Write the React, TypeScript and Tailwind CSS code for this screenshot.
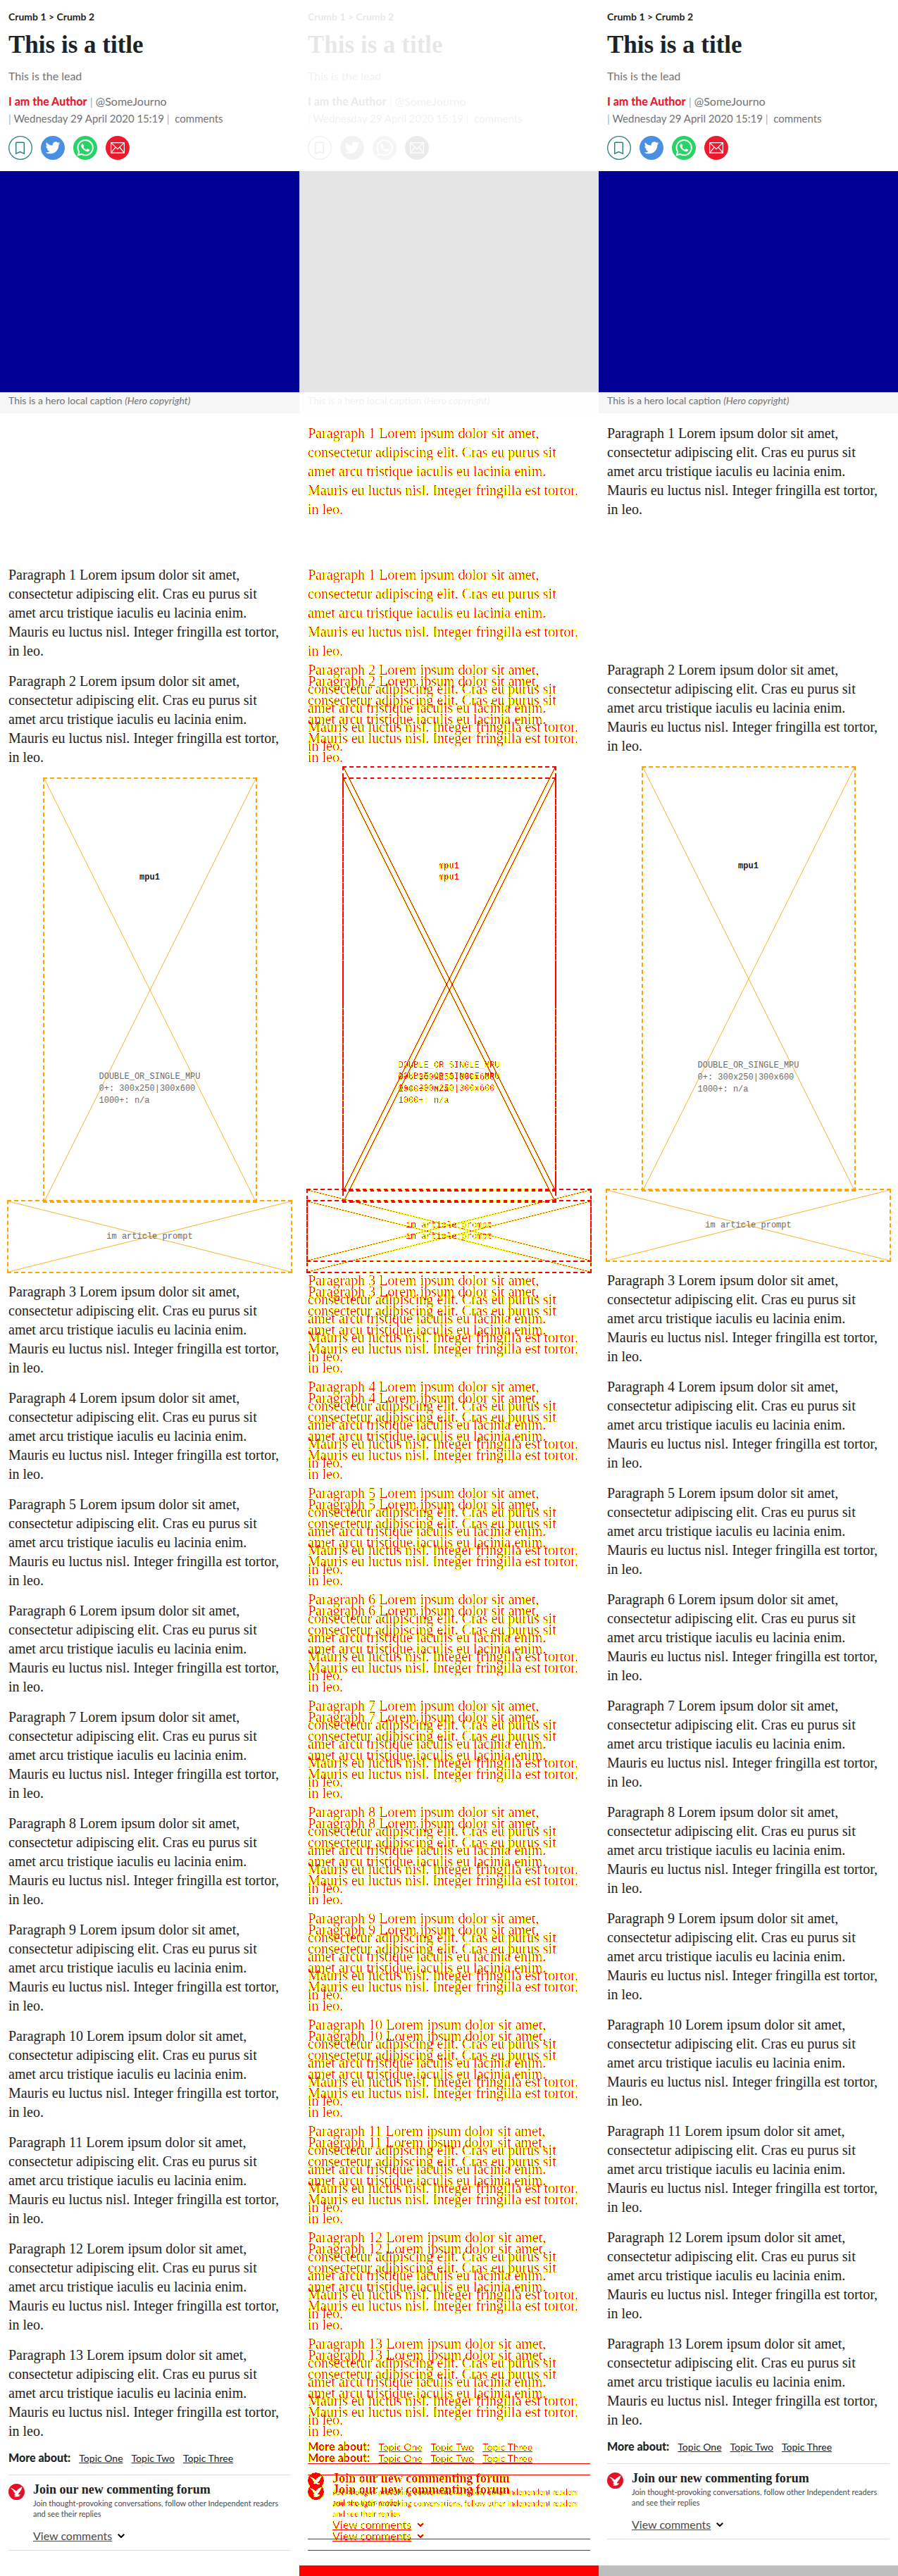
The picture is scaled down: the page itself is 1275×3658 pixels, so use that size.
import React from "react";

const SANS = "font-['Lato','Open_Sans',sans-serif]";
const REST = [3, 4, 5, 6, 7, 8, 9, 10, 11, 12, 13];

function ShareBar() {
  return (
    <div className="mt-[13px] flex gap-3">
      <button aria-label="Bookmark" className="size-[34px]">
        <svg viewBox="0 0 34 34" fill="none" stroke="#2f7f7f">
          <circle cx="17" cy="17" r="16.3" strokeWidth="1.3" />
          <path d="M10.7 10.2a.9.9 0 0 1 .9-.9h9.8a.9.9 0 0 1 .9.9v15l-5.8-2.6-5.8 2.6z" strokeWidth="1.5" />
        </svg>
      </button>
      <button aria-label="Share on Twitter" className="size-[34px]">
        <svg viewBox="0 0 34 34">
          <circle cx="17" cy="17" r="17" fill="#4a90e2" />
          <path
            transform="translate(6.6 6.4) scale(.87)"
            fill="#fff"
            d="M23.95 4.57a10 10 0 0 1-2.82.77 4.96 4.96 0 0 0 2.16-2.72c-.95.55-2 .95-3.13 1.18a4.92 4.92 0 0 0-8.38 4.48C7.69 8.1 4.07 6.13 1.64 3.16a4.82 4.82 0 0 0-.67 2.48c0 1.71.87 3.21 2.19 4.1a4.9 4.9 0 0 1-2.23-.62v.06a4.92 4.92 0 0 0 3.95 4.83 5 5 0 0 1-2.21.08 4.94 4.94 0 0 0 4.6 3.42A9.87 9.87 0 0 1 0 19.54a14 14 0 0 0 7.55 2.21c9.05 0 14-7.5 14-13.98 0-.21 0-.42-.02-.63a9.94 9.94 0 0 0 2.46-2.55z"
          />
        </svg>
      </button>
      <button aria-label="Share on WhatsApp" className="size-[34px]">
        <svg viewBox="0 0 34 34">
          <circle cx="17" cy="17" r="17" fill="#25d366" />
          <path
            transform="translate(5.4 5) scale(.98)"
            fill="#fff"
            d="M17.47 14.38c-.3-.15-1.76-.87-2.03-.97-.27-.1-.47-.15-.67.15-.2.3-.77.97-.94 1.16-.17.2-.35.22-.64.08-.3-.15-1.26-.46-2.39-1.48-.88-.79-1.48-1.76-1.65-2.06-.17-.3-.02-.46.13-.6.13-.14.3-.35.45-.53.15-.17.2-.3.3-.5.1-.2.05-.37-.03-.52-.07-.15-.67-1.61-.91-2.2-.24-.58-.49-.5-.67-.51h-.57c-.2 0-.52.07-.79.37-.27.3-1.04 1.02-1.04 2.48s1.07 2.88 1.21 3.07c.15.2 2.1 3.2 5.08 4.49.71.3 1.26.49 1.7.63.71.22 1.36.19 1.87.12.57-.09 1.76-.72 2-1.42.25-.69.25-1.29.18-1.41-.07-.13-.27-.2-.57-.35M12.05 21.8a9.87 9.87 0 0 1-5.03-1.38l-.36-.22-3.74.98 1-3.65-.24-.37A9.86 9.86 0 0 1 2.16 11.9c0-5.45 4.44-9.88 9.89-9.88a9.82 9.82 0 0 1 9.88 9.89c0 5.45-4.44 9.89-9.88 9.89M20.46 3.49A11.82 11.82 0 0 0 12.05 0C5.5 0 .16 5.34.16 11.89c0 2.1.55 4.14 1.59 5.95L.06 24l6.3-1.65a11.88 11.88 0 0 0 5.69 1.45c6.55 0 11.89-5.34 11.89-11.9a11.82 11.82 0 0 0-3.48-8.41"
          />
        </svg>
      </button>
      <button aria-label="Share by email" className="size-[34px]">
        <svg viewBox="0 0 34 34" fill="none" stroke="#fff" strokeWidth="1.2">
          <circle cx="17" cy="17" r="17" fill="#ec1a2e" stroke="none" />
          <path d="M7.6 9.6h18.8v14.6H7.6zM7.6 9.6l9.4 9 9.4-9M7.6 24.2l6.6-8.2M26.4 24.2L19.8 16" />
        </svg>
      </button>
    </div>
  );
}

function Header() {
  return (
    <header>
      <div className="px-3 pt-4 pb-4">
        <nav className={`${SANS} text-sm leading-4 font-bold text-[#222]`}>
          <a href="#c1">Crumb 1</a> &gt; <a href="#c2">Crumb 2</a>
        </nav>
        <h1 className="mt-3 font-['Liberation_Serif',serif] text-[35px] leading-10 font-bold text-[#222]">This is a title</h1>
        <p className={`${SANS} mt-3 text-base leading-6 text-[#737373]`}>This is the lead</p>
        <div className={`${SANS} mt-3 text-[#737373]`}>
          <div className="h-6 text-base leading-6">
            <a href="#author" className="font-black text-[#ec1a2e]">I am the Author</a>{" "}
            <span className="text-[#aaa]">|</span> <a href="#journo">@SomeJourno</a>
          </div>
          <div className="h-6 text-[15px] leading-6">
            <span className="text-[#aaa]">|</span> Wednesday 29 April 2020 15:19 <span className="text-[#aaa]">|</span>&nbsp; comments
          </div>
        </div>
        <ShareBar />
      </div>
      <div className="h-[314px] bg-[#000095]" />
      <p className={`${SANS} h-[30px] bg-[#f6f6f6] px-3 text-sm leading-6 text-[#737373]`}>
        This is a hero local caption <em>(Hero copyright)</em>
      </p>
    </header>
  );
}

function Cross({ heavy = false }: { heavy?: boolean }) {
  return (
    <svg className="absolute inset-0 size-full" viewBox="0 0 100 100" preserveAspectRatio="none">
      <path d="M0 0L100 100M100 0L0 100" stroke="#ffb02a" strokeWidth={heavy ? 1.6 : 1} vectorEffect="non-scaling-stroke" />
    </svg>
  );
}

/* The bird is cut out of the disc, so the page shows through it. */
function Logo() {
  return (
    <svg viewBox="0 0 23 23" className="size-[23px] shrink-0">
      <path
        fill="#e4102a"
        fillRule="evenodd"
        d="M11.5 0a11.5 11.5 0 1 0 0 23a11.5 11.5 0 1 0 0-23zM3 6l3.4 1.2L10 9.800l1.400.4 1.900-2.100L18.700 4.500 19.600 5l-1.300 3.200-2.300 3.500-1.800 2.200-.3 1.300 3.300.4-.3.700-2.400.2 1.500 1.200-3.300.9-4 .2-.4-.7 2.700-.8-2.500-.9.700-.8-1.700-.6 2.500-.8-1.600-1.600-1.700-2.600.8-.1-2.600-2z"
      />
    </svg>
  );
}

function Para({ n }: { n: number }) {
  return (
    <p className="mb-4">
      Paragraph {n} Lorem ipsum dolor sit amet,
      <br />
      consectetur adipiscing elit. Cras eu purus sit
      <br />
      amet arcu tristique iaculis eu lacinia enim.
      <br />
      Mauris eu luctus nisl. Integer fringilla est tortor,
      <br />
      in leo.
    </p>
  );
}

function Body({ variant, diff = false }: { variant: "before" | "after"; diff?: boolean }) {
  return (
    <div className="col-start-1 row-start-1 px-3 pt-[15px] text-[#222]">
      <div className="font-['Liberation_Serif',serif] text-[20px] leading-[27px]">
        {variant === "before" && <div className="mb-4 h-[185px]" />}
        <Para n={1} />
        {variant === "after" && <div className="h-[185px]" />}
        <Para n={2} />
      </div>
      <div className="relative mx-auto mt-[17px] flex h-[600px] w-[300px] flex-col items-center font-['Liberation_Mono',monospace] text-xs leading-[17px] outline-2 outline-[#ffa500] outline-dashed">
        <Cross heavy={diff} />
        <strong className="relative mt-[132px]">mpu1</strong>
        <p className="relative mt-[266px] text-[#6b6b6b]">
          DOUBLE_OR_SINGLE_MPU
          <br />
          0+: 300x250|300x600
          <br />
          1000+: n/a
        </p>
      </div>
      <div className="relative mb-[15px] flex h-[100px] items-center justify-center font-['Liberation_Mono',monospace] text-xs outline-2 outline-[#ffa500] outline-dashed">
        <Cross />
        <span className="relative text-[#6b6b6b]">im article prompt</span>
      </div>
      <div className="font-['Liberation_Serif',serif] text-[20px] leading-[27px]">
        {REST.map((n) => (
          <Para key={n} n={n} />
        ))}
      </div>
      <div className={`${SANS} flex h-8 items-baseline gap-3 text-sm leading-4`}>
        <strong className="text-base leading-4 font-black">More about:</strong>
        <a href="#t1" className="underline">Topic One</a>
        <a href="#t2" className="underline">Topic Two</a>
        <a href="#t3" className="underline">Topic Three</a>
      </div>
      <section className="flex gap-3 border-y border-[#ddd] pt-3 pb-2">
        <Logo />
        <div className={SANS}>
          <h2 className="font-['Liberation_Serif',serif] text-[18px] leading-4 font-bold">Join our new commenting forum</h2>
          <p className="mt-1 text-[11px] leading-[15px] text-[#4a4a4a]">
            Join thought-provoking conversations, follow other Independent readers and see their replies
          </p>
          <button className="mt-3 flex items-center gap-2 text-base leading-6 text-[#4a4a4a]">
            <span className="underline">View comments</span>
            <svg viewBox="0 0 10 6" className="w-[10px]" fill="none" stroke="#000" strokeWidth="2">
              <path d="M.7.7L5 5L9.300.7" />
            </svg>
          </button>
        </div>
      </section>
    </div>
  );
}

/* Paints solid pixels red and partly covered edge pixels yellow. */
function DiffFilter() {
  return (
    <svg className="absolute size-0" aria-hidden="true">
      <filter id="diff" x="0" y="0" width="100%" height="100%" colorInterpolationFilters="sRGB">
        <feColorMatrix values="0 0 0 0 1  0 0 0 -20 17  0 0 0 0 0  0 0 0 20 -3" />
      </filter>
    </svg>
  );
}

export default function App() {
  return (
    <main className="grid grid-cols-3 bg-white">
      <article className="pb-9">
        <Header />
        <Body variant="before" />
      </article>
      <article className="flex flex-col">
        <DiffFilter />
        <div className="opacity-10 grayscale">
          <Header />
        </div>
        <div className="grid pb-[21px] [filter:url(#diff)]">
          <Body variant="after" diff />
          <Body variant="before" diff />
        </div>
        <div className="flex-1 bg-[#f00]" />
      </article>
      <article className="flex flex-col">
        <Header />
        <div className="pb-[37px]">
          <Body variant="after" />
        </div>
        <div className="flex-1 bg-[#bebebe]" />
      </article>
    </main>
  );
}
